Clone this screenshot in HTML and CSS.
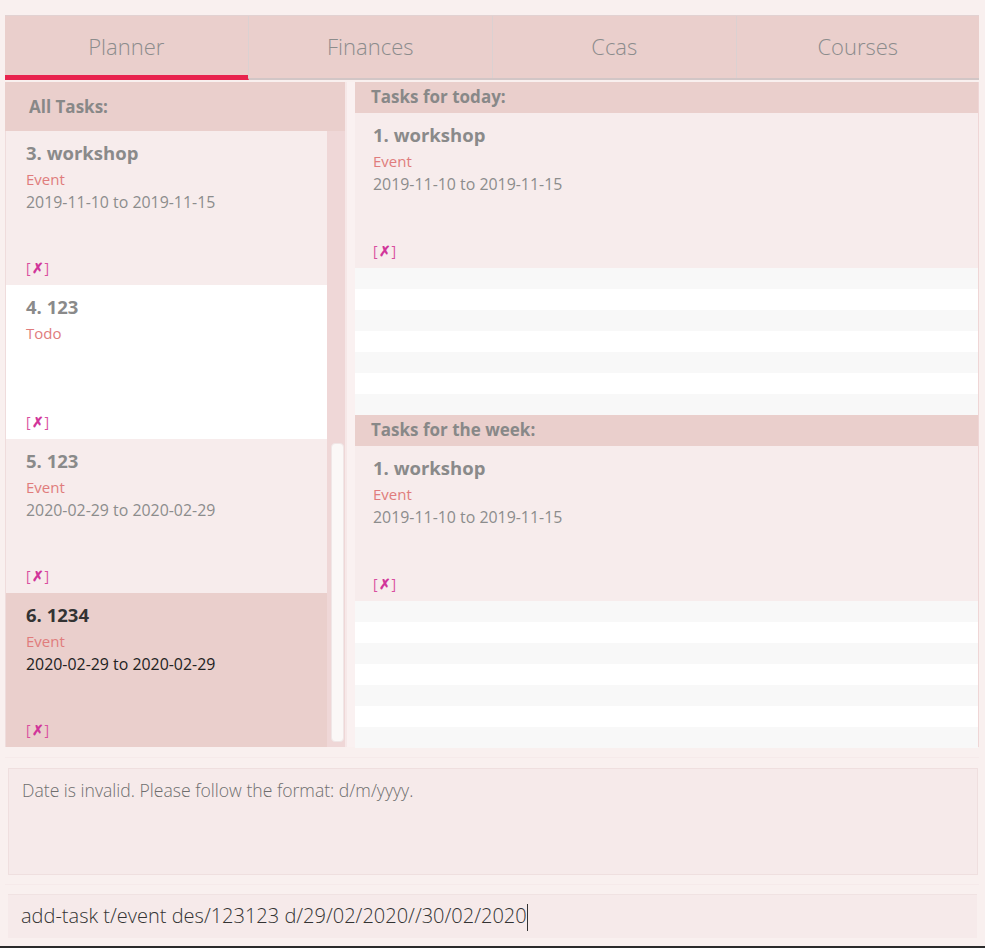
FILE: index.html
```html
<!DOCTYPE html>
<html>
<head>
<meta charset="utf-8">
<link rel="stylesheet" href="styles.css">
</head>
<body>
<div class="app">
  <div class="tabs">
    <div class="tab active">Planner</div>
    <div class="tab">Finances</div>
    <div class="tab">Ccas</div>
    <div class="tab">Courses</div>
  </div>
  <div class="main">
    <div class="left">
      <div class="left-head">All Tasks:</div>
      <div class="left-body">
        <div class="list">
          <div class="card alt">
            <div class="title">3. workshop</div>
            <div class="type">Event</div>
            <div class="date">2019-11-10 to 2019-11-15</div>
            <div class="mark">[<b>✗</b>]</div>
          </div>
          <div class="card white">
            <div class="title">4. 123</div>
            <div class="type">Todo</div>
            <div class="mark">[<b>✗</b>]</div>
          </div>
          <div class="card alt">
            <div class="title">5. 123</div>
            <div class="type">Event</div>
            <div class="date">2020-02-29 to 2020-02-29</div>
            <div class="mark">[<b>✗</b>]</div>
          </div>
          <div class="card selected">
            <div class="title">6. 1234</div>
            <div class="type">Event</div>
            <div class="date">2020-02-29 to 2020-02-29</div>
            <div class="mark">[<b>✗</b>]</div>
          </div>
        </div>
        <div class="track"><div class="thumb"></div></div>
      </div>
    </div>
    <div class="divider"></div>
    <div class="right">
      <div class="sec-head">Tasks for today:</div>
      <div class="card alt rcard">
        <div class="title">1. workshop</div>
        <div class="type">Event</div>
        <div class="date">2019-11-10 to 2019-11-15</div>
        <div class="mark">[<b>✗</b>]</div>
      </div>
      <div class="stripes">
        <div></div><div></div><div></div><div></div><div></div><div></div><div></div>
      </div>
      <div class="sec-head">Tasks for the week:</div>
      <div class="card alt rcard">
        <div class="title">1. workshop</div>
        <div class="type">Event</div>
        <div class="date">2019-11-10 to 2019-11-15</div>
        <div class="mark">[<b>✗</b>]</div>
      </div>
      <div class="stripes">
        <div></div><div></div><div></div><div></div><div></div><div></div><div></div>
      </div>
    </div>
  </div>
  <div class="result-wrap">
    <div class="result">Date is invalid. Please follow the format: d/m/yyyy.</div>
  </div>
  <div class="cmd-wrap">
    <div class="cmd">add-task t/event des/123123 d/29/02/2020//30/02/2020<span class="caret"></span></div>
  </div>
</div>
</body>
</html>
```
FILE: styles.css
```css
* { box-sizing: border-box; }
html, body { margin: 0; padding: 0; }
body {
  background: #f9f0ef;
  font-family: "Open Sans", "Noto Sans", sans-serif;
  width: 985px;
  height: 948px;
  overflow: hidden;
}
.app {
  height: 948px;
  padding: 15px 6px 0 5px;
  display: flex;
  flex-direction: column;
  border-bottom: 2px solid #2b2b2b;
}
.tabs {
  display: grid;
  grid-template-columns: repeat(4, 1fr);
  height: 65px;
  background: #eacfcc;
  border-top: 1px solid #e2d2d2;
  border-bottom: 2px solid #d2c6c6;
}
.tab {
  display: flex;
  align-items: center;
  justify-content: center;
  font-weight: 300;
  font-size: 22px;
  color: #8c8c8c;
  border-left: 1px solid #dbd1d1;
  padding-bottom: 3px;
}
.tab:first-child { border-left: none; }
.tab.active {
  box-shadow: inset 0 -3px 0 #e8234d;
  margin-bottom: -2px;
  border-bottom: 2px solid #e8234d;
  border-right: 1px solid #dbd1d1;
}
.tab.active + .tab { border-left: none; }
.main {
  display: flex;
  height: 667px;
}
.left {
  width: 340px;
  display: flex;
  flex-direction: column;
}
.left-head {
  height: 49px;
  margin-top: 2px;
  background: #eacfcc;
  font-weight: 700;
  font-size: 17px;
  color: #888;
  padding: 13px 0 0 24px;
  flex: none;
}
.left-body {
  display: flex;
  flex: 1;
  min-height: 0;
  border-left: 1px solid #efdcdc;
}
.list {
  flex: 1;
  display: flex;
  flex-direction: column;
  overflow: hidden;
}
.card {
  height: 154px;
  flex: none;
  padding: 10px 20px 0 20px;
  display: flex;
  flex-direction: column;
  position: relative;
}
.card.alt { background: #f7ecec; }
.card.white { background: #ffffff; }
.card.selected { background: #eacfcc; }
.title {
  font-weight: 700;
  font-size: 18.5px;
  color: #8a8a8a;
  line-height: 24px;
}
.type {
  font-size: 15px;
  color: #e07c7c;
  margin-top: 4px;
  line-height: 20px;
}
.date {
  font-size: 15.9px;
  color: #8c8c8c;
  line-height: 22px;
  margin-top: 2px;
}
.selected .title { color: #333; }
.selected .date { color: #222; }
.mark {
  position: absolute;
  left: 20px;
  bottom: 8px;
  font-size: 14px;
  color: #d94fa0;
  letter-spacing: 1px;
}
.mark b { font-weight: 700; color: #d1359a; }
.track {
  width: 18px;
  background: #efd7d7;
  padding: 312px 1px 5px 4px;
  display: flex;
}
.thumb {
  flex: 1;
  background: #fbf8f7;
  border: 1px solid #f0e6e6;
  border-radius: 4px;
}
.divider {
  width: 10px;
  background: #faf1f1;
  border-left: 2px solid #f6e8e8;
  margin-top: 2px;
}
.right {
  flex: 1;
  display: flex;
  flex-direction: column;
  margin-top: 2px;
  border-right: 1px solid #efd6d6;
  border-bottom: 1px solid #efd6d6;
}
.sec-head {
  height: 31px;
  background: #eacfcc;
  font-weight: 700;
  font-size: 17px;
  color: #888;
  padding: 3px 0 0 16px;
  flex: none;
}
.rcard {
  height: 155px;
  padding-left: 18px;
}
.rcard .mark { left: 18px; }
.stripes {
  display: flex;
  flex-direction: column;
  flex: none;
}
.stripes div { height: 21px; }
.stripes div:nth-child(odd) { background: #f8f8f8; }
.stripes div:nth-child(even) { background: #ffffff; }
.result-wrap {
  margin-top: 10px;
  border-top: 1px solid #f6eaea;
  padding: 10px 1px 0 3px;
}
.result {
  height: 107px;
  background: #f6eaea;
  border: 1px solid #efdfdf;
  padding: 9px 13px;
  font-size: 17.6px;
  font-weight: 300;
  color: #6e6e6e;
}
.cmd-wrap {
  margin-top: 9px;
  border-top: 1px solid #f6eaea;
  padding: 9px 2px 0 3px;
}
.cmd {
  height: 44px;
  background: #f6eaea;
  border-top: 1px solid #f0e2e2;
  padding: 7px 13px 0 13px;
  font-size: 20px;
  font-weight: 300;
  color: #333;
  display: flex;
  align-items: flex-start;
}
.caret {
  display: inline-block;
  width: 1px;
  height: 27px;
  background: #333;
  margin-top: 2px;
}
```
